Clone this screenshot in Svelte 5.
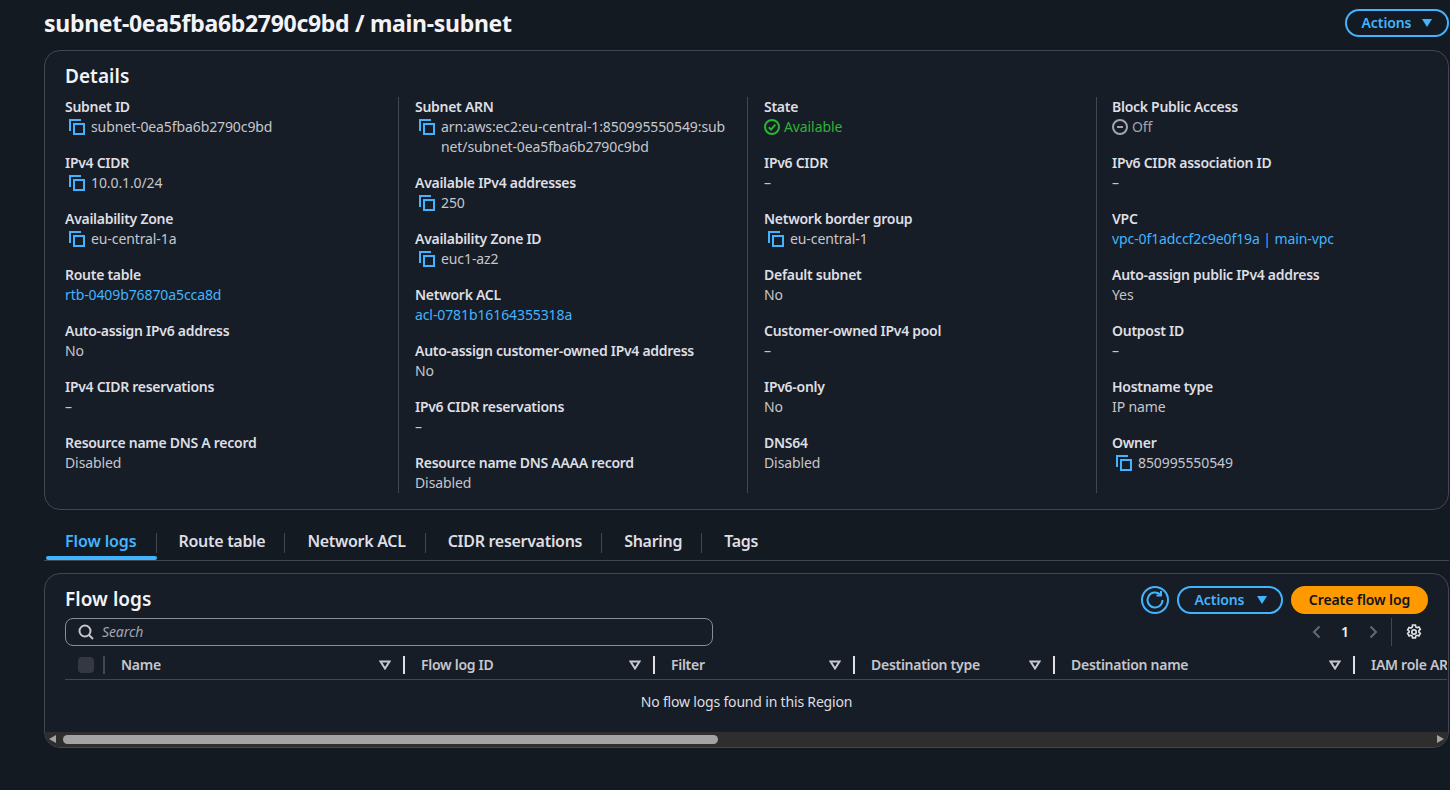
<script lang="ts">
	const columns = [
		[
			{ label: 'Subnet ID', value: 'subnet-0ea5fba6b2790c9bd', copy: true },
			{ label: 'IPv4 CIDR', value: '10.0.1.0/24', copy: true },
			{ label: 'Availability Zone', value: 'eu-central-1a', copy: true },
			{ label: 'Route table', value: 'rtb-0409b76870a5cca8d', link: true },
			{ label: 'Auto-assign IPv6 address', value: 'No' },
			{ label: 'IPv4 CIDR reservations', value: '–' },
			{ label: 'Resource name DNS A record', value: 'Disabled' }
		],
		[
			{ label: 'Subnet ARN', value: 'arn:aws:ec2:eu-central-1:850995550549:subnet/subnet-0ea5fba6b2790c9bd', copy: true },
			{ label: 'Available IPv4 addresses', value: '250', copy: true },
			{ label: 'Availability Zone ID', value: 'euc1-az2', copy: true },
			{ label: 'Network ACL', value: 'acl-0781b16164355318a', link: true },
			{ label: 'Auto-assign customer-owned IPv4 address', value: 'No' },
			{ label: 'IPv6 CIDR reservations', value: '–' },
			{ label: 'Resource name DNS AAAA record', value: 'Disabled' }
		],
		[
			{ label: 'State', value: 'Available', status: 'ok' },
			{ label: 'IPv6 CIDR', value: '–' },
			{ label: 'Network border group', value: 'eu-central-1', copy: true },
			{ label: 'Default subnet', value: 'No' },
			{ label: 'Customer-owned IPv4 pool', value: '–' },
			{ label: 'IPv6-only', value: 'No' },
			{ label: 'DNS64', value: 'Disabled' }
		],
		[
			{ label: 'Block Public Access', value: 'Off', status: 'off' },
			{ label: 'IPv6 CIDR association ID', value: '–' },
			{ label: 'VPC', value: 'vpc-0f1adccf2c9e0f19a | main-vpc', link: true },
			{ label: 'Auto-assign public IPv4 address', value: 'Yes' },
			{ label: 'Outpost ID', value: '–' },
			{ label: 'Hostname type', value: 'IP name' },
			{ label: 'Owner', value: '850995550549', copy: true }
		]
	];

	const tabs = ['Flow logs', 'Route table', 'Network ACL', 'CIDR reservations', 'Sharing', 'Tags'];
	const headers = [
		{ name: 'Name', width: 300 },
		{ name: 'Flow log ID', width: 250 },
		{ name: 'Filter', width: 200 },
		{ name: 'Destination type', width: 200 },
		{ name: 'Destination name', width: 300 },
		{ name: 'IAM role ARN', width: 300 }
	];
</script>

{#snippet caret()}
	<svg class="caret" viewBox="0 0 12 10" aria-hidden="true"><path d="M1 1h10L6 9z" /></svg>
{/snippet}

<main class="page">
	<header class="title-row">
		<h1>subnet-0ea5fba6b2790c9bd / main-subnet</h1>
		<button class="btn">Actions {@render caret()}</button>
	</header>

	<section class="card details">
		<h2>Details</h2>
		<div class="columns">
			{#each columns as col}
				<div class="col">
					{#each col as item}
						<div class="item">
							<div class="label">{item.label}</div>
							{#if item.copy}
								<div class="value copy">
									<svg class="copy-icon" viewBox="0 0 16 16" aria-hidden="true">
										<path d="M1 12V1h11" />
										<rect x="5" y="5" width="10" height="10" />
									</svg>
									<span>{item.value}</span>
								</div>
							{:else if item.link}
								<div class="value link">{item.value}</div>
							{:else if item.status === 'ok'}
								<div class="value status ok">
									<svg viewBox="0 0 16 16" aria-hidden="true">
										<circle cx="8" cy="8" r="7" />
										<path d="M4.8 8.2l2.3 2.4 4.2-5" />
									</svg>
									{item.value}
								</div>
							{:else if item.status === 'off'}
								<div class="value status off">
									<svg viewBox="0 0 16 16" aria-hidden="true">
										<circle cx="8" cy="8" r="7" />
										<path d="M5 8h6" />
									</svg>
									{item.value}
								</div>
							{:else}
								<div class="value">{item.value}</div>
							{/if}
						</div>
					{/each}
				</div>
			{/each}
		</div>
	</section>

	<nav class="tabs">
		{#each tabs as tab, i}
			<div class="tab" class:active={i === 0}>{tab}</div>
		{/each}
	</nav>

	<section class="card logs">
		<div class="logs-head">
			<h2>Flow logs</h2>
			<div class="logs-actions">
				<button class="icon-btn" aria-label="Refresh">
					<svg viewBox="0 0 20 20" aria-hidden="true">
						<path d="M17.5 10a7.5 7.5 0 1 1-2.4-5.5" />
						<path d="M16 1v4.5h-4.5" />
					</svg>
				</button>
				<button class="btn wide">Actions {@render caret()}</button>
				<button class="btn primary">Create flow log</button>
			</div>
		</div>

		<div class="tools">
			<div class="search">
				<svg viewBox="0 0 16 16" aria-hidden="true">
					<circle cx="7" cy="7" r="5.5" />
					<path d="M11 11l4 4" />
				</svg>
				<span>Search</span>
			</div>
			<div class="pager">
				<svg class="chev" viewBox="0 0 16 16" aria-hidden="true"><path d="M10.5 2.5L5 8l5.5 5.5" /></svg>
				<span class="page-num">1</span>
				<svg class="chev" viewBox="0 0 16 16" aria-hidden="true"><path d="M5.5 2.5L11 8l-5.5 5.5" /></svg>
				<span class="pager-sep"></span>
				<svg class="gear" viewBox="0 0 16 16" aria-hidden="true">
					<path d="M6.6 1h2.8l.4 1.9 1.3.7 1.8-.6 1.4 2.4-1.4 1.3v1.5l1.4 1.3-1.4 2.4-1.8-.6-1.3.7-.4 1.9H6.6l-.4-1.9-1.3-.7-1.8.6-1.4-2.4 1.4-1.3V7.1L1.7 5.8l1.4-2.4 1.8.6 1.3-.7z" />
					<circle cx="8" cy="8" r="2.2" />
				</svg>
			</div>
		</div>

		<div class="table-wrap">
			<div class="table-head">
				<div class="check-cell"><span class="check"></span></div>
				{#each headers as h}
					<div class="th" style="width: {h.width}px">
						<span>{h.name}</span>
						<svg viewBox="0 0 12 10" aria-hidden="true"><path d="M1.5 1.5h9L6 8.5z" /></svg>
					</div>
				{/each}
			</div>
		</div>
		<div class="empty">No flow logs found in this Region</div>

		<div class="scrollbar">
			<span class="arrow left"></span>
			<span class="thumb"></span>
			<span class="arrow right"></span>
		</div>
	</section>
</main>

<style>
	:global(body) {
		background: #131a22;
		font-family: 'Noto Sans', 'Open Sans', sans-serif;
	}

	.page {
		height: 790px;
		box-sizing: border-box;
		padding: 9px 1px 0 44px;
		overflow: hidden;
		font-size: 14px;
		line-height: 20px;
		letter-spacing: -0.1px;
		color: #c6c6cd;
	}

	.title-row {
		display: flex;
		justify-content: space-between;
		align-items: flex-start;
		height: 28px;
		margin-bottom: 13px;
	}

	h1 {
		margin: 0;
		font-size: 23px;
		line-height: 28px;
		font-weight: 700;
		letter-spacing: -0.3px;
		color: #f3f3f7;
	}

	h2 {
		margin: 0;
		font-size: 19px;
		line-height: 22px;
		font-weight: 600;
		letter-spacing: 0.05px;
		color: #f3f3f7;
	}

	button {
		font: inherit;
		letter-spacing: inherit;
	}

	.btn {
		display: inline-flex;
		align-items: center;
		justify-content: center;
		gap: 10px;
		width: 104px;
		height: 28px;
		box-sizing: border-box;
		padding: 0 0 0 1px;
		border: 2px solid #42b4ff;
		border-radius: 20px;
		background: transparent;
		color: #42b4ff;
		font-weight: 600;
	}

	.btn.wide {
		width: 106px;
		gap: 12px;
		padding-left: 3px;
	}

	.btn.primary {
		width: 137px;
		padding-left: 0;
		border-color: #ff9900;
		background: #ff9900;
		color: #0f141a;
	}

	.caret {
		width: 12px;
		height: 10px;
		fill: #42b4ff;
	}

	.card {
		box-sizing: border-box;
		border: 1px solid #424650;
		border-radius: 16px;
		background: #161d26;
		padding: 0 20px;
	}

	.details {
		height: 460px;
		padding-top: 14px;
	}

	.columns {
		display: grid;
		grid-template-columns: repeat(4, 1fr);
		margin: 10px -17px 0 -16px;
	}

	.col {
		display: flex;
		flex-direction: column;
		gap: 16px;
		padding: 0 15px 0 16px;
		min-height: 396px;
		min-width: 0;
		border-left: 1px solid #424650;
	}

	.col:first-child {
		padding-left: 15px;
		border-left-color: transparent;
	}

	.col:last-child {
		padding-left: 15px;
	}

	.label {
		font-weight: 600;
		letter-spacing: -0.28px;
		color: #dedee3;
	}

	.copy {
		display: flex;
		align-items: flex-start;
		gap: 6px;
		padding-left: 4px;
	}

	.copy span {
		min-width: 0;
		word-break: break-all;
	}

	.copy-icon {
		flex: none;
		width: 16px;
		height: 16px;
		margin-top: 2px;
		fill: none;
		stroke: #42b4ff;
		stroke-width: 2;
	}

	.link {
		color: #42b4ff;
	}

	.status {
		display: flex;
		align-items: center;
		gap: 4px;
	}

	.status svg {
		width: 16px;
		height: 16px;
		fill: none;
		stroke: currentColor;
		stroke-width: 2;
	}

	.ok {
		color: #2bb534;
	}

	.off {
		color: #a4a4ad;
	}

	.tabs {
		display: flex;
		height: 51px;
		box-sizing: border-box;
		padding: 19px 0 0 2px;
		border-bottom: 1px solid #424650;
	}

	.tab {
		position: relative;
		height: 31px;
		padding: 0 20px 0 22px;
		font-size: 16px;
		line-height: 24px;
		font-weight: 600;
		letter-spacing: -0.3px;
		color: #dedee3;
	}

	.tab:not(:last-child)::before {
		content: '';
		position: absolute;
		right: 0;
		top: 4px;
		height: 20px;
		width: 1px;
		background: #424650;
	}

	.tab.active {
		color: #42b4ff;
		padding-left: 19px;
		letter-spacing: -0.1px;
	}

	.tab.active::after {
		content: '';
		position: absolute;
		left: 0;
		right: 0;
		bottom: 0;
		height: 4px;
		border-radius: 2px;
		background: #42b4ff;
	}

	.logs {
		position: relative;
		height: 175px;
		margin-top: 12px;
		overflow: hidden;
	}

	.logs-head {
		display: flex;
		justify-content: space-between;
		align-items: center;
		margin-top: 12px;
		height: 28px;
	}

	.logs-head h2 {
		margin-top: -2px;
	}

	.logs-actions {
		display: flex;
		gap: 8px;
		align-items: center;
	}

	.icon-btn {
		width: 28px;
		height: 28px;
		padding: 2px;
		box-sizing: border-box;
		border: 2px solid #42b4ff;
		border-radius: 50%;
		background: transparent;
		display: flex;
	}

	.icon-btn svg {
		width: 20px;
		height: 20px;
		fill: none;
		stroke: #42b4ff;
		stroke-width: 2;
	}

	.tools {
		display: flex;
		justify-content: space-between;
		align-items: center;
		margin-top: 4px;
		height: 28px;
	}

	.search {
		display: flex;
		align-items: center;
		gap: 8px;
		width: 648px;
		height: 28px;
		box-sizing: border-box;
		padding-left: 12px;
		border: 1px solid #8c8c94;
		border-radius: 8px;
		background: #161d26;
		font-style: italic;
		color: #a4a4ad;
	}

	.search svg {
		width: 16px;
		height: 16px;
		fill: none;
		stroke: #c6c6cd;
		stroke-width: 2;
	}

	.pager {
		display: flex;
		align-items: center;
		height: 28px;
		margin-right: 6px;
	}

	.chev {
		width: 16px;
		height: 16px;
		fill: none;
		stroke: #656871;
		stroke-width: 2;
	}

	.page-num {
		width: 40px;
		text-align: center;
		font-weight: 600;
		color: #f3f3f7;
	}

	.pager-sep {
		width: 1px;
		height: 28px;
		margin: 0 14px 0 10px;
		background: #424650;
	}

	.gear {
		width: 16px;
		height: 16px;
		fill: none;
		stroke: #dedee3;
		stroke-width: 1.7;
	}

	.table-wrap {
		margin-right: -19px;
		overflow: hidden;
	}

	.table-head {
		display: flex;
		height: 34px;
		width: max-content;
		box-sizing: border-box;
		padding-top: 4px;
		border-bottom: 1px solid #424650;
		font-weight: 600;
		letter-spacing: -0.28px;
		color: #c6c6cd;
		white-space: nowrap;
	}

	.check-cell {
		flex: none;
		position: relative;
		display: flex;
		align-items: center;
		width: 39px;
		padding-left: 13px;
		box-sizing: border-box;
	}

	.check-cell::after {
		content: '';
		position: absolute;
		right: -1px;
		top: 6px;
		height: 18px;
		width: 2px;
		background: #424650;
	}

	.check {
		width: 16px;
		height: 16px;
		border-radius: 4px;
		background: #333843;
	}

	.th {
		flex: none;
		position: relative;
		display: flex;
		align-items: center;
		justify-content: space-between;
		box-sizing: border-box;
		padding: 0 13px 0 17px;
	}

	.th::after {
		content: '';
		position: absolute;
		right: -1px;
		top: 6px;
		height: 18px;
		width: 2px;
		background: #dedee3;
	}

	.th svg {
		width: 12px;
		height: 10px;
		fill: none;
		stroke: #c6c6cd;
		stroke-width: 2;
	}

	.empty {
		height: 52px;
		box-sizing: border-box;
		padding-top: 12px;
		text-align: center;
		letter-spacing: -0.18px;
		color: #dedee3;
	}

	.scrollbar {
		position: relative;
		height: 15px;
		margin: 0 -20px;
		background: #2e2e2e;
	}

	.thumb {
		position: absolute;
		left: 18px;
		top: 3px;
		width: 655px;
		height: 9px;
		border-radius: 5px;
		background: #a3a3a3;
	}

	.arrow {
		position: absolute;
		top: 3px;
		width: 0;
		height: 0;
		border-top: 4.5px solid transparent;
		border-bottom: 4.5px solid transparent;
	}

	.arrow.left {
		left: 4px;
		border-right: 7px solid #a3a3a3;
	}

	.arrow.right {
		right: 4px;
		border-left: 7px solid #a3a3a3;
	}
</style>
